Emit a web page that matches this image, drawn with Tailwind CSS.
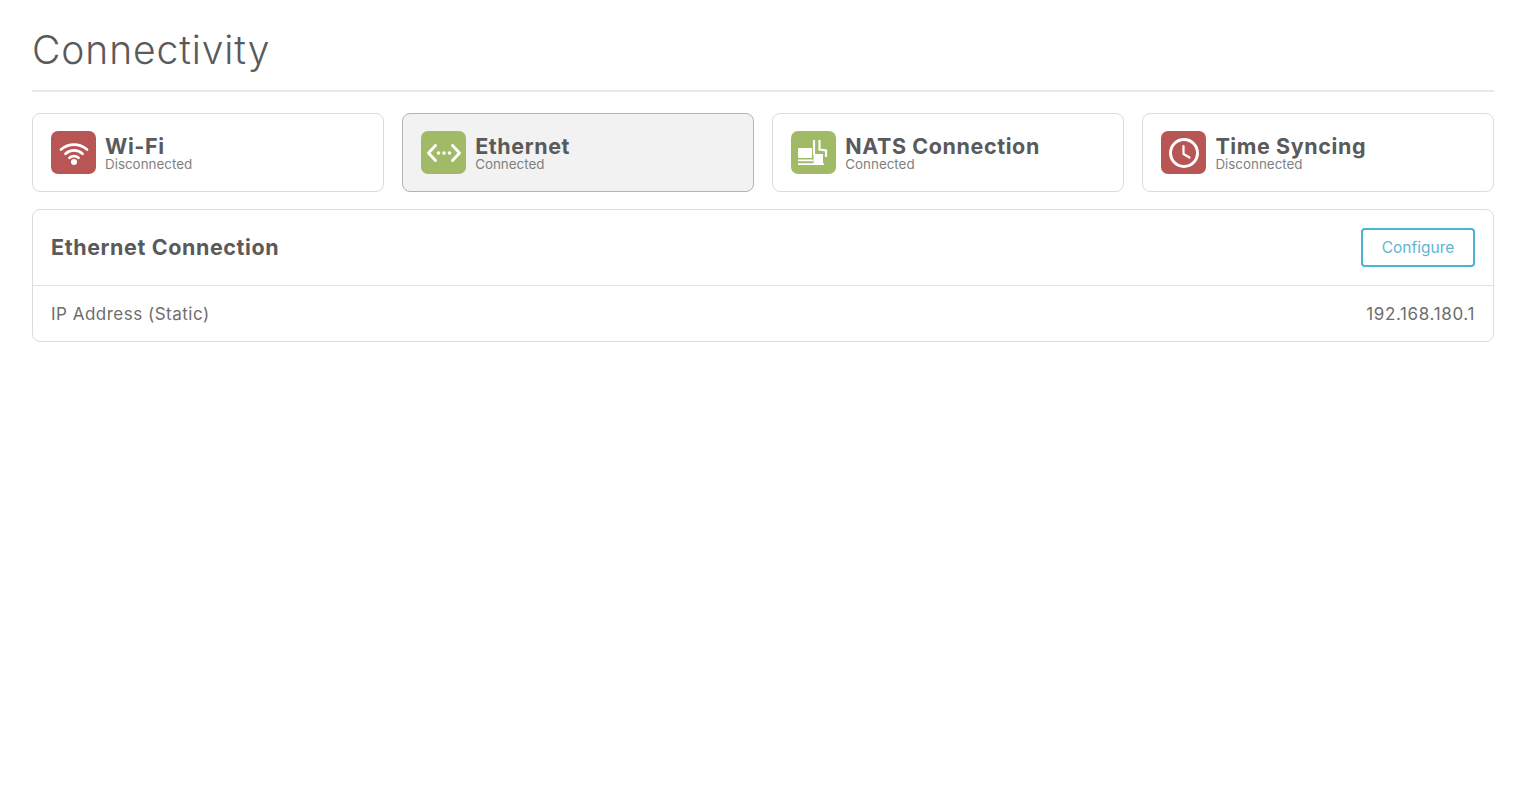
<!DOCTYPE html>
<html lang="en">
<head>
  <meta charset="UTF-8">
  <meta name="viewport" content="width=device-width, initial-scale=1.0">
  <title>Connectivity</title>
  <script src="https://cdn.jsdelivr.net/npm/@tailwindcss/browser@4"></script>
</head>

<body class="bg-white font-['Inter',sans-serif] text-[#5a5a5a]">
  <div class="pl-8 pr-7 pt-[26px]">
    <h1 class="text-[39px] leading-[48px] font-light tracking-[0.9px] pb-[16px] border-b-2 border-[#e9e9e9]">Connectivity</h1>

    <!-- status cards -->
    <div class="grid grid-cols-4 gap-[18.5px] mt-[21px]">
      <div class="h-[79px] flex items-center gap-[9px] px-[18px] bg-white border border-[#dcdcdc] rounded-lg">
        <div class="w-[45px] h-[43px] rounded-[7px] bg-[#b85555] flex items-center justify-center">
          <svg class="w-[32px] h-[32px]" viewBox="0 0 32 32" fill="none" stroke="white" stroke-width="2.7" stroke-linecap="round">
            <path d="M3 12.5C10.5 6 21.5 6 29 12.5"/>
            <path d="M7.5 16.8C12.5 12.3 19.5 12.3 24.5 16.8"/>
            <path d="M11.5 20.8C14 18.6 18 18.6 20.5 20.8"/>
            <circle cx="16" cy="25" r="3" fill="white" stroke="none"/>
          </svg>
        </div>
        <div>
          <div class="text-[21.5px] leading-[22px] font-bold tracking-[0.6px]">Wi-Fi</div>
          <div class="text-[13.4px] leading-[14px] text-[#7f7f7f]">Disconnected</div>
        </div>
      </div>

      <div class="h-[79px] flex items-center gap-[9px] px-[18px] bg-[#f2f2f2] border border-[#b4b4b4] rounded-lg">
        <div class="w-[45px] h-[43px] rounded-[7px] bg-[#a0ba66] flex items-center justify-center">
          <svg class="w-[36px] h-[24px]" viewBox="0 0 36 24" fill="none" stroke="white" stroke-width="3" stroke-linecap="round" stroke-linejoin="round">
            <path d="M9.5 4.5L2.5 12L9.5 19.5"/>
            <path d="M26.5 4.5L33.5 12L26.5 19.5"/>
            <circle cx="12.5" cy="12" r="1.8" fill="white" stroke="none"/>
            <circle cx="18" cy="12" r="1.8" fill="white" stroke="none"/>
            <circle cx="23.5" cy="12" r="1.8" fill="white" stroke="none"/>
          </svg>
        </div>
        <div>
          <div class="text-[21.5px] leading-[22px] font-bold tracking-[0.6px]">Ethernet</div>
          <div class="text-[13.4px] leading-[14px] text-[#7f7f7f]">Connected</div>
        </div>
      </div>

      <div class="h-[79px] flex items-center gap-[9px] px-[18px] bg-white border border-[#dcdcdc] rounded-lg">
        <div class="w-[45px] h-[43px] rounded-[7px] bg-[#a0ba66] flex items-center justify-center">
          <svg class="w-[45px] h-[43px]" viewBox="0 0 45 43" fill="white">
            <rect x="7" y="17" width="14" height="10" rx="1"/>
            <path d="M7 28.5H22V30.2H7zM7 32.2H33V34H7z"/>
            <path d="M22.5 23H32V34H22.5z"/>
            <path d="M23 9V24M28.5 9V18.5L35 19.5V26" fill="none" stroke="white" stroke-width="2.2"/>
          </svg>
        </div>
        <div>
          <div class="text-[21.5px] leading-[22px] font-bold tracking-[0.6px]">NATS Connection</div>
          <div class="text-[13.4px] leading-[14px] text-[#7f7f7f]">Connected</div>
        </div>
      </div>

      <div class="h-[79px] flex items-center gap-[9px] px-[18px] bg-white border border-[#dcdcdc] rounded-lg">
        <div class="w-[45px] h-[43px] rounded-[7px] bg-[#b85555] flex items-center justify-center">
          <svg class="w-[32px] h-[32px]" viewBox="0 0 32 32" fill="none" stroke="white" stroke-width="3" stroke-linecap="round" stroke-linejoin="round">
            <circle cx="16" cy="16" r="13.5"/>
            <path d="M15.5 9V17L21.5 20.5" stroke-width="2.2"/>
          </svg>
        </div>
        <div>
          <div class="text-[21.5px] leading-[22px] font-bold tracking-[0.6px]">Time Syncing</div>
          <div class="text-[13.4px] leading-[14px] text-[#7f7f7f]">Disconnected</div>
        </div>
      </div>
    </div>

    <!-- detail panel -->
    <div class="mt-[17px] border border-[#dcdcdc] rounded-lg">
      <div class="h-[76px] flex items-center justify-between px-[18px] border-b border-[#e2e2e2]">
        <h2 class="text-[21.5px] font-bold tracking-[0.6px]">Ethernet Connection</h2>
        <button class="w-[114px] h-[39px] border-2 border-[#4bb4d0] rounded text-[15.5px] text-[#62b6d2]">Configure</button>
      </div>
      <div class="h-[55px] pt-[2px] flex items-center justify-between px-[18px] text-[17px] tracking-[0.5px] text-[#6e6e6e]">
        <span>IP Address (Static)</span>
        <span class="tracking-[0.65px]">192.168.180.1</span>
      </div>
    </div>
  </div>
</body>

</html>
